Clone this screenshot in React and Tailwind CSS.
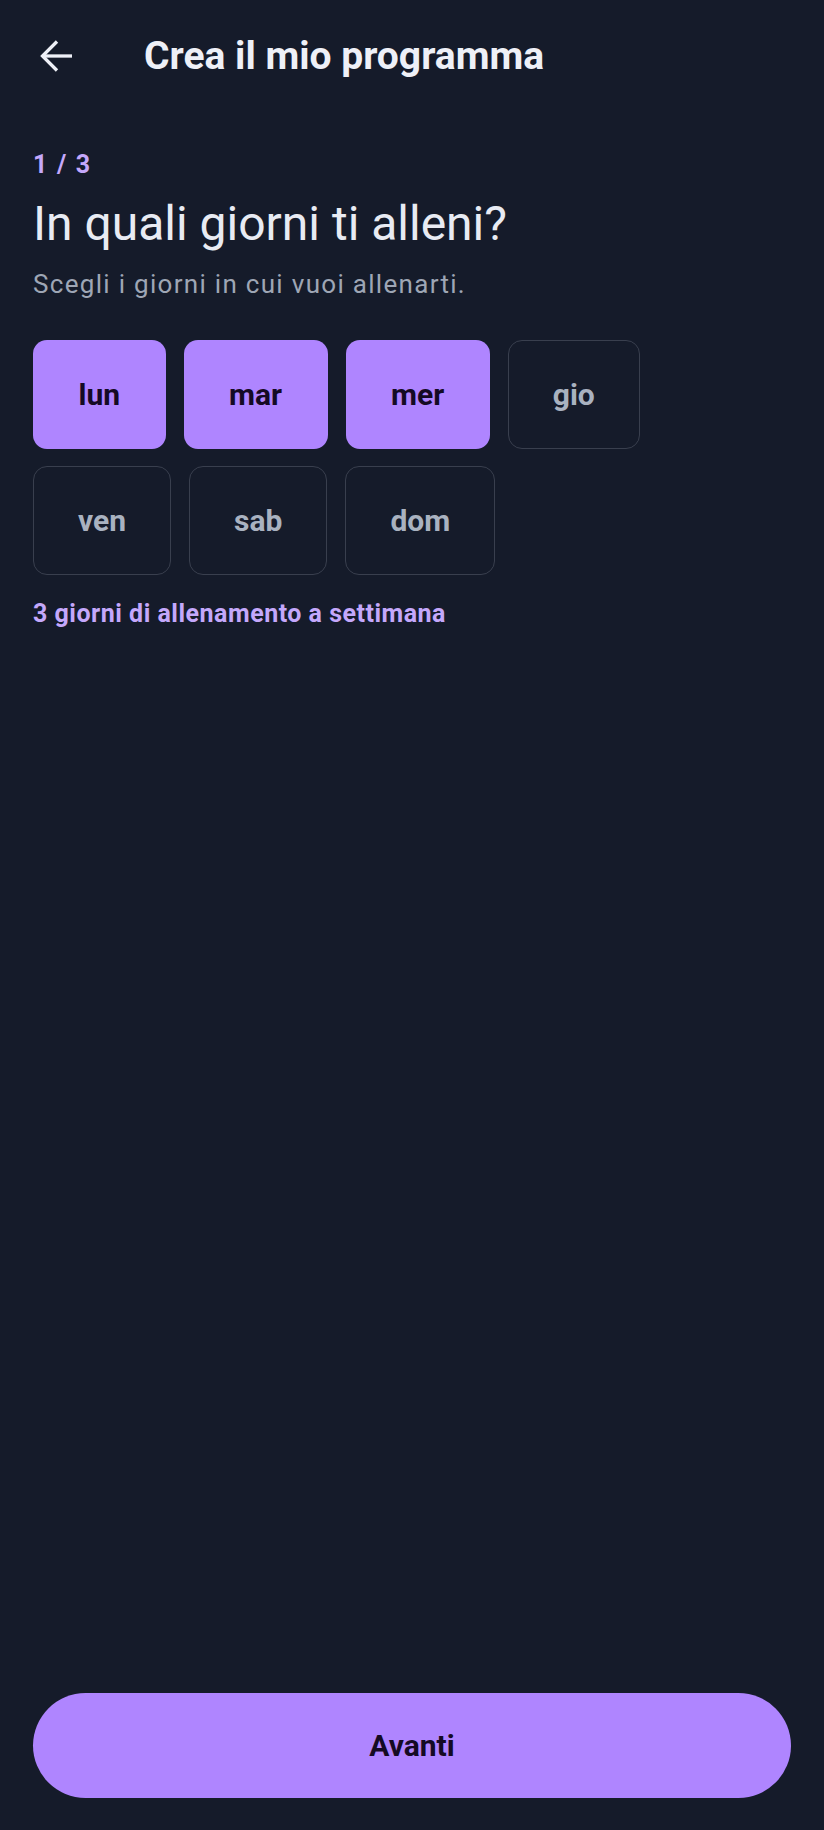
import { useState } from 'react'

const DAYS = ['lun', 'mar', 'mer', 'gio', 'ven', 'sab', 'dom']

function BackArrow() {
  return (
    <svg width="34" height="34" viewBox="0 0 34 34" fill="none" stroke="currentColor" strokeWidth="3.3">
      <path d="M33 17 H3" />
      <path d="M18 2.5 L3.5 17 L18 31.5" strokeLinejoin="miter" />
    </svg>
  )
}

export default function App() {
  const [selected, setSelected] = useState(['lun', 'mar', 'mer'])

  const toggle = (d) =>
    setSelected((s) => (s.includes(d) ? s.filter((x) => x !== d) : [...s, d]))

  return (
    <div
      className="min-h-screen bg-[#151b2a] flex flex-col"
      style={{ fontFamily: "Roboto, 'Noto Sans', sans-serif" }}
    >
      {/* Header */}
      <div className="h-[112px] flex items-center pl-[39px]">
        <button className="text-[#eef0f7] w-[34px] h-[34px] flex items-center justify-center">
          <BackArrow />
        </button>
        <h1 className="ml-[71px] text-[39px] leading-[46px] font-bold text-[#eef0f7]">
          Crea il mio programma
        </h1>
      </div>

      <div className="px-[33px] pt-[38px]">
        <div className="text-[25px] leading-[30px] font-bold tracking-[1.7px] text-[#c4a8fb]">1 / 3</div>
        <h2 className="mt-[16px] text-[48px] leading-[56px] text-[#e8ebf3]">In quali giorni ti alleni?</h2>
        <p className="mt-[16px] text-[26px] leading-[32px] tracking-[1.3px] text-[#9ea6b5]">
          Scegli i giorni in cui vuoi allenarti.
        </p>

        {/* day chips */}
        <div className="mt-[40px] flex flex-wrap gap-x-[18px] gap-y-[17px]">
          {DAYS.map((d) => {
            const on = selected.includes(d)
            return (
              <button
                key={d}
                onClick={() => toggle(d)}
                className={
                  on
                    ? 'h-[109px] px-[45.5px] rounded-[14px] bg-[#af85ff] text-[#150a24] text-[30px] font-bold flex items-center justify-center'
                    : 'h-[109px] px-[44px] rounded-[14px] border-[1.5px] border-[#393f4e] text-[#a9b2c0] text-[30px] font-bold flex items-center justify-center'
                }
              >
                {d}
              </button>
            )
          })}
        </div>

        <div className="mt-[24px] text-[25px] leading-[30px] font-bold tracking-[0.5px] text-[#c4a8fb]">
          {selected.length} giorni di allenamento a settimana
        </div>
      </div>

      <div className="mt-auto px-[33px] pb-[32px]">
        <button className="w-full h-[105px] rounded-full bg-[#af85ff] text-[#150a24] text-[30px] font-bold">
          Avanti
        </button>
      </div>
    </div>
  )
}
